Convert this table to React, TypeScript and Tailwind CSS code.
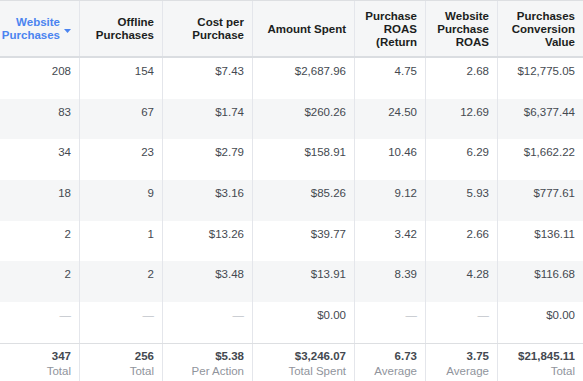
import React from 'react';

type Col = {
  title: string[];
  width: string;
  active?: boolean;
};

const columns: Col[] = [
  { title: ['Website', 'Purchases'], width: 'w-[80px]', active: true },
  { title: ['Offline', 'Purchases'], width: 'w-[83px]' },
  { title: ['Cost per', 'Purchase'], width: 'w-[90px]' },
  { title: ['Amount Spent'], width: 'w-[102px]' },
  { title: ['Purchase', 'ROAS', '(Return'], width: 'w-[71px]' },
  { title: ['Website', 'Purchase', 'ROAS'], width: 'w-[72px]' },
  { title: ['Purchases', 'Conversion', 'Value'], width: 'w-[85px]' },
];

const rows: string[][] = [
  ['208', '154', '$7.43', '$2,687.96', '4.75', '2.68', '$12,775.05'],
  ['83', '67', '$1.74', '$260.26', '24.50', '12.69', '$6,377.44'],
  ['34', '23', '$2.79', '$158.91', '10.46', '6.29', '$1,662.22'],
  ['18', '9', '$3.16', '$85.26', '9.12', '5.93', '$777.61'],
  ['2', '1', '$13.26', '$39.77', '3.42', '2.66', '$136.11'],
  ['2', '2', '$3.48', '$13.91', '8.39', '4.28', '$116.68'],
  ['—', '—', '—', '$0.00', '—', '—', '$0.00'],
];

const totals = [
  ['347', 'Total'],
  ['256', 'Total'],
  ['$5.38', 'Per Action'],
  ['$3,246.07', 'Total Spent'],
  ['6.73', 'Average'],
  ['3.75', 'Average'],
  ['$21,845.11', 'Total'],
];

export default function App() {
  return (
    <div
      className="w-[583px] h-[381px] overflow-hidden bg-white border-t border-[#dddfe2] text-[11.5px]"
      style={{ fontFamily: '"Liberation Sans", Arial, sans-serif' }}
    >
      {/* header */}
      <div className="flex bg-[#f5f6f7] border-b-2 border-[#dadde1]">
        {columns.map((c, i) => (
          <div
            key={i}
            className={`${c.width} h-[55px] shrink-0 py-2 ${c.active ? 'pl-0 pr-2' : 'px-2'} ${i < columns.length - 1 ? 'border-r border-[#e4e6eb]' : ''}`}
          >
            <div className="h-[40px] flex flex-col justify-center-safe">
              <div className="flex items-center justify-end">
                <div
                  className={`shrink-0 text-right font-bold leading-[13px] ${c.active ? 'text-[#4b84f0]' : 'text-[#1c1e21]'}`}
                >
                  {c.title.map((t, j) => (
                    <div key={j} className="whitespace-nowrap">{t}</div>
                  ))}
                </div>
                {c.active && (
                  <svg width="7" height="4" viewBox="0 0 7 4" className="shrink-0 ml-[4px] mt-[4px]">
                    <path d="M0 0 L7 0 L3.5 4 Z" fill="#4b84f0" />
                  </svg>
                )}
              </div>
            </div>
          </div>
        ))}
      </div>

      {/* body */}
      {rows.map((r, ri) => (
        <div key={ri} className={`flex h-[40.7px] ${ri % 2 === 1 ? 'bg-[#f5f6f7]' : 'bg-white'}`}>
          {r.map((v, ci) => (
            <div
              key={ci}
              className={`${columns[ci].width} shrink-0 px-2 pt-[5px] text-right leading-[16px] ${ci < columns.length - 1 ? 'border-r border-[#e4e6eb]' : ''} ${v === '—' ? 'text-[#c2c6cc]' : 'text-[#444950]'}`}
            >
              {v}
            </div>
          ))}
        </div>
      ))}

      {/* totals */}
      <div className="flex border-t border-[#dddfe2] bg-white h-[40px]">
        {totals.map(([v, label], ci) => (
          <div
            key={ci}
            className={`${columns[ci].width} shrink-0 px-2 pt-[5px] text-right ${ci < columns.length - 1 ? 'border-r border-[#e4e6eb]' : ''}`}
          >
            <div className="font-bold text-[#444950] leading-[15px]">{v}</div>
            <div className="text-[#90949c] leading-[14px]">{label}</div>
          </div>
        ))}
      </div>
    </div>
  );
}
